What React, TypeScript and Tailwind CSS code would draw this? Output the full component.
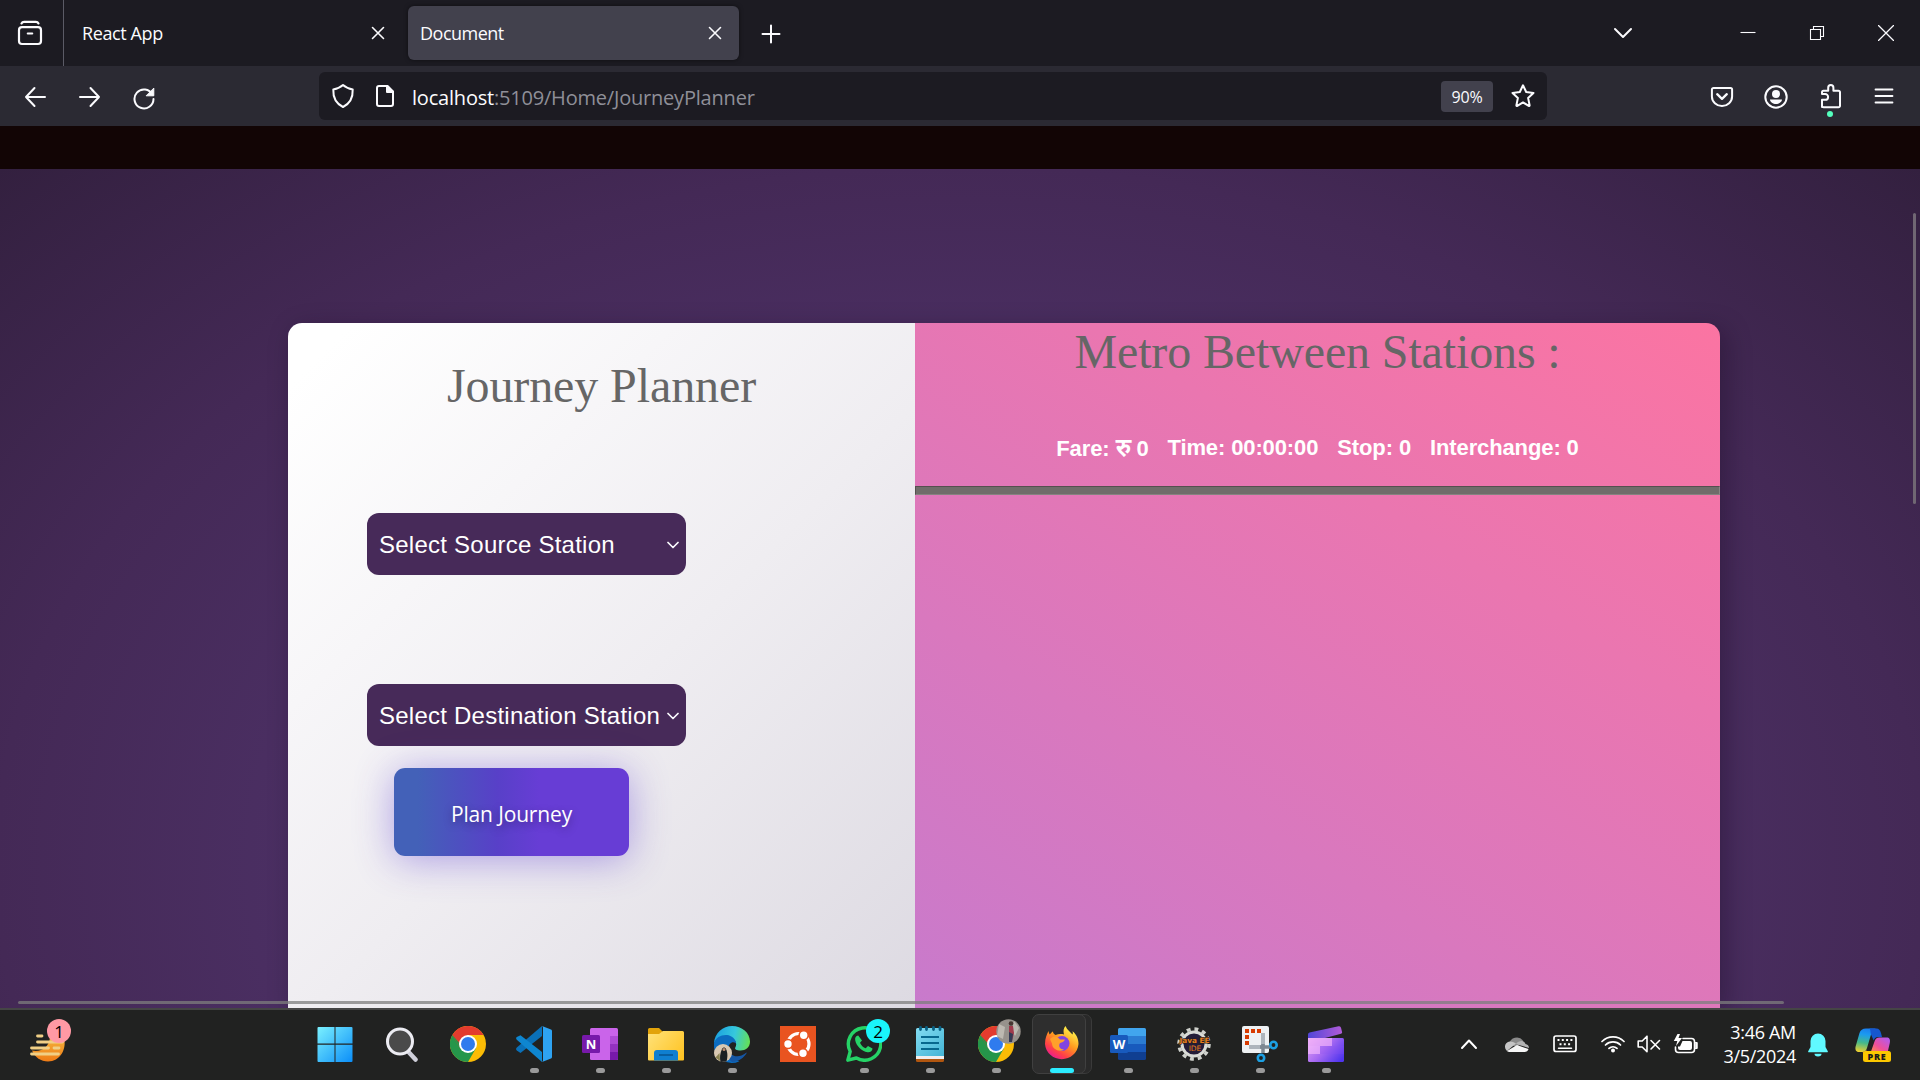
import React from "react";

type IconProps = { w: number; h: number; className?: string; children: React.ReactNode };

function Icon({ w, h, className = "", children }: IconProps) {
  return (
    <svg
      width={w}
      height={h}
      viewBox={`0 0 ${w} ${h}`}
      fill="none"
      stroke="#fbfbfe"
      strokeWidth={2}
      strokeLinecap="round"
      strokeLinejoin="round"
      className={`block shrink-0 ${className}`}
    >
      {children}
    </svg>
  );
}

function CloseIcon() {
  return (
    <Icon w={14} h={14}>
      <path d="M1.5 1.5l11 11M12.5 1.5l-11 11" strokeWidth={1.6} />
    </Icon>
  );
}

function TabBar() {
  return (
    <div className="flex h-[66px] items-center bg-[#1c1b22] text-[18px] text-[#fbfbfe]">
      <div className="flex h-full w-[64px] items-center border-r border-[#5b5b66] pl-[17px]">
        <Icon w={26} h={26}>
          <rect x="2" y="7.2" width="22" height="16.8" rx="3" strokeWidth={2.2} />
          <path d="M4.5 3.4c.6-1.2 1.4-1.5 2.6-1.5h11.800c1.200 0 2 .3 2.600 1.500M10.800 13.500h4.400" strokeWidth={2.2} />
        </Icon>
      </div>
      <div className="flex w-[344px] items-center justify-between pr-[23px] pl-[18px]">
        <span className="tracking-[-0.4px]">React App</span>
        <CloseIcon />
      </div>
      <div className="flex h-[54px] w-[331px] items-center justify-between rounded-[6px] bg-[#42414d] pr-[17px] pl-[12px] shadow-[0_0_4px_rgba(0,0,0,0.5)]">
        <span className="tracking-[-0.5px]">Document</span>
        <CloseIcon />
      </div>
      <Icon w={20} h={20} className="mt-[2px] ml-[22px]">
        <path d="M10 1.500v17M1.500 10h17" />
      </Icon>
      <div className="ml-auto flex items-center">
        <Icon w={20} h={12} className="mr-[107px]">
          <path d="M2 2l8 8 8-8" />
        </Icon>
        <Icon w={16} h={16} className="mr-[53px]">
          <path d="M.5 7.500h15" strokeWidth={1.100} strokeLinecap="butt" />
        </Icon>
        <Icon w={16} h={16} className="mr-[53px]">
          <path d="M1.500 4.500h10v10h-10zM4.500 4.500v-3h10v10h-3" strokeWidth={1.100} strokeLinejoin="miter" />
        </Icon>
        <Icon w={16} h={16} className="mr-[26px]">
          <path d="M.5.5l15 15M15.500.5l-15 15" strokeWidth={1.300} />
        </Icon>
      </div>
    </div>
  );
}

function Toolbar() {
  return (
    <div className="flex h-[60px] items-center bg-[#2b2a33] pl-[24px] text-[#fbfbfe]">
      <Icon w={22} h={22} className="mt-[2px] mr-[33px]">
        <path d="M10.500 2L2 11l8.500 9M2 11h19" />
      </Icon>
      <Icon w={22} h={22} className="mt-[2px] mr-[31px]">
        <path d="M11.500 2L20 11l-8.500 9M20 11H1" />
      </Icon>
      <Icon w={24} h={24} className="mt-[3px] mr-[163px]">
        <path d="M20.400 8.500A9.500 9.500 0 1 0 21.500 13" />
        <path d="M21.800 2.500v7.300h-7.300z" fill="#fbfbfe" strokeWidth={1} />
      </Icon>
      <div className="flex h-[48px] w-[1228px] items-center rounded-[6px] bg-[#1c1b22] pl-[12px]">
        <Icon w={24} h={26} className="mr-[20px]">
          <path d="M12 2C9.500 4.300 6 5.700 2.300 6.500c-.3 7 1.700 13.500 9.700 17.500 8-4 10-10.500 9.700-17.500C18 5.700 14.500 4.300 12 2z" />
        </Icon>
        <Icon w={20} h={24} className="mr-[16px]">
          <path d="M4 2h8.500L18 7.500V20a2 2 0 0 1-2 2H4a2 2 0 0 1-2-2V4a2 2 0 0 1 2-2z" />
          <path d="M12 2v6h6z" fill="#fbfbfe" />
        </Icon>
        <span className="mt-[3px] ml-px text-[20px] tracking-[-0.2px] text-[#8f8f98]">
          <span className="text-[#fbfbfe]">localhost</span>:5109/Home/JourneyPlanner
        </span>
        <span className="mt-px mr-[17px] ml-auto flex h-[31px] w-[52px] items-center justify-center rounded-[4px] bg-[#42414d] pt-px text-[16px] tracking-[-0.2px]">
          90%
        </span>
        <Icon w={26} h={26} className="mr-[11px]">
          <path d="M13 2.300l3.200 6.700 7.300.9-5.400 5 1.500 7.400c.1.600-.4.900-.9.600L13 19.400l-5.700 3.500c-.5.300-1 0-.9-.6l1.500-7.400-5.400-5 7.300-.9z" />
        </Icon>
      </div>
      <Icon w={24} h={22} className="mt-px ml-[163px]">
        <path d="M3.500 2h17a1.600 1.600 0 0 1 1.600 1.600v6.900a10.100 9.500 0 0 1-20.200 0V3.600A1.600 1.600 0 0 1 3.500 2z" />
        <path d="M7.200 8.200L12 12.800l4.800-4.600" strokeWidth={2.300} />
      </Icon>
      <Icon w={24} h={24} className="mt-px ml-[30px]">
        <circle cx="12" cy="12" r="10.700" />
        <circle cx="12" cy="9" r="4" fill="#fbfbfe" stroke="none" />
        <path d="M6 14.500h12c0 2.500-3 4.500-6 4.500s-6-2-6-4.500z" fill="#fbfbfe" stroke="none" />
      </Icon>
      <div className="relative ml-[32px]">
        <Icon w={22} h={26}>
          <path d="M2 24V16.800h3.200a2.900 2.900 0 0 0 0-5.800H2V9.300a1.500 1.500 0 0 1 1.500-1.500h4.700V4.700a2.600 2.600 0 0 1 5.200 0v3.100h5.100A1.500 1.500 0 0 1 20 9.300V22.700a1.500 1.500 0 0 1-1.500 1.500H3.500A1.500 1.500 0 0 1 2 22.700z" />
        </Icon>
        <span className="absolute top-[28px] left-[7px] size-[6px] rounded-full bg-[#54ffbd]" />
      </div>
      <Icon w={20} h={18} className="mb-px ml-[32px]">
        <path d="M1.500 2.500h17M1.500 9h17M1.500 15.500h17" strokeWidth={1.800} />
      </Icon>
    </div>
  );
}

function StationSelect({ label }: { label: string }) {
  return (
    <div className="flex h-[62px] w-[319px] items-center justify-between rounded-[12px] bg-[#472a59] pr-[7px] pl-[12px] text-[24px] text-white">
      <span className="mt-[2px] tracking-[0.24px] whitespace-nowrap">{label}</span>
      <Icon w={12} h={10} className="mt-px">
        <path d="M1 2.500L6 7.500l5-5" strokeWidth={1.700} />
      </Icon>
    </div>
  );
}

function PlannerPanel() {
  return (
    <section className="flex w-[627px] flex-col bg-[linear-gradient(135deg,#ffffff_5%,#efedf1_54%,#dddae2_100%)] font-['Liberation_Sans',Arial,sans-serif]">
      <h1 className="mt-[35px] h-[56px] text-center font-['Liberation_Serif','Times_New_Roman',serif] text-[48px] leading-[55px] tracking-[-0.1px] text-[#666666]">
        Journey Planner
      </h1>
      <div className="mt-[99px] ml-[79px]">
        <StationSelect label="Select Source Station" />
      </div>
      <div className="mt-[109px] ml-[79px]">
        <StationSelect label="Select Destination Station" />
      </div>
      <button className="mt-[22px] ml-[106px] h-[88px] w-[235px] rounded-[11px] bg-[linear-gradient(90deg,#4361b8_10%,#5840c8_44%,#673dd5_62%)] pt-[6px] font-['Open_Sans',sans-serif] text-[21px] tracking-[-0.15px] text-white shadow-[0_4px_38px_rgba(90,60,210,0.45)] [text-shadow:0_3px_8px_rgba(0,0,0,0.35)]">
        Plan Journey
      </button>
    </section>
  );
}

function ResultPanel() {
  return (
    <section className="flex w-[805px] flex-col bg-[linear-gradient(32deg,#c87acc_0%,#fb74a2_100%)] font-['Liberation_Sans',Arial,sans-serif]">
      <h2 className="mt-px h-[56px] text-center font-['Liberation_Serif','Times_New_Roman',serif] text-[48px] leading-[55px] tracking-[-0.13px] text-[#666666]">
        Metro Between Stations :
      </h2>
      <div className="mt-[55px] flex h-[26px] justify-center gap-[19px] text-[22px] leading-[26px] font-bold tracking-[-0.12px] whitespace-nowrap text-white">
        <span>
          Fare: <span className="text-[25px] leading-none font-semibold">रु</span> 0
        </span>
        <span>Time: 00:00:00</span>
        <span>Stop: 0</span>
        <span>Interchange: 0</span>
      </div>
      <div className="mt-[25px] h-[9px] border border-t-[#55504f] border-r-[#8b8785] border-b-[#858380] border-l-[#55504f] bg-[#706c6a]" />
    </section>
  );
}

function Page() {
  return (
    <main className="relative flex h-[839px] justify-center overflow-hidden bg-[radial-gradient(1358px_984px_at_50%_696px,#553670_0%,#4b2f63_49%,#442956_71%,#33203f_100%)] pl-[88px]">
      <div className="mt-[154px] flex h-[685px] w-[1432px] overflow-hidden rounded-t-[14px] shadow-[6px_6px_24px_rgba(20,5,30,0.35)]">
        <PlannerPanel />
        <ResultPanel />
      </div>
      <div className="absolute top-[44px] left-[1913px] h-[291px] w-[3px] rounded-full bg-[#706773]" />
      <div className="absolute top-[832px] left-[18px] h-[3px] w-[1766px] rounded-full bg-[#7d7d7d]/75" />
    </main>
  );
}

function ChromeLogo() {
  return (
    <svg width="36" height="36" viewBox="0 0 36 36" className="block">
      <circle cx="18" cy="18" r="18" fill="#fbbc05" />
      <path d="M18 18L2.400 9A18 18 0 0 0 18 36l7.800-13.500z" fill="#25964a" />
      <path d="M2.400 9A18 18 0 0 1 33.600 9H18l-7.800 13.500z" fill="#e33b2e" />
      <path d="M2.400 9l7.800 13.500L12 20z" fill="#25964a" />
      <circle cx="18" cy="18" r="9" fill="#fff" />
      <circle cx="18" cy="18" r="7" fill="#2f7bee" />
    </svg>
  );
}

function WindowsLogo() {
  return (
    <svg width="36" height="36" viewBox="0 0 36 36" className="block -translate-x-px">
      <defs>
        <linearGradient id="win" x1="0" y1="0" x2="36" y2="36" gradientUnits="userSpaceOnUse">
          <stop stopColor="#7df3ff" />
          <stop offset="1" stopColor="#0a8df8" />
        </linearGradient>
      </defs>
      <path d="M1.500 1h16v16.500H.5V2a1 1 0 0 1 1-1zM18.500 1h16a1 1 0 0 1 1 1v15.500h-17zM.5 18.700h17V36h-16a1 1 0 0 1-1-1zM18.500 18.700h17V35a1 1 0 0 1-1 1h-16z" fill="url(#win)" />
    </svg>
  );
}

function SearchLogo() {
  return (
    <svg width="36" height="36" viewBox="0 0 36 36" className="block">
      <path d="M25 26.500l6.500 7" stroke="#cfcfda" strokeWidth="4.500" strokeLinecap="round" />
      <circle cx="16" cy="15.500" r="12.500" fill="#4a4a4a" stroke="#ececf2" strokeWidth="3" />
    </svg>
  );
}

function CodeLogo() {
  return (
    <svg width="36" height="36" viewBox="0 0 36 36" className="block">
      <path d="M26 0v10L4.500 27 .8 24.500c-1-.7-1-2 0-3z" fill="#0a70b8" />
      <path d="M4.500 9.200L26 26v10L.8 13.800c-.9-.8-.9-2.100 0-2.800z" fill="#0e86d0" />
      <path d="M26 0l9 3.500c.6.300 1 .8 1 1.500v26c0 .7-.4 1.200-1 1.500L26 36c.6-.5 1-1 1-2V2c0-1-.4-1.500-1-2z" fill="#2ea3f2" />
    </svg>
  );
}

function OneNoteLogo() {
  return (
    <svg width="36" height="36" viewBox="0 0 36 36" className="block">
      <rect x="8" y="2" width="28" height="32" rx="1.500" fill="#ca64ea" />
      <path d="M28 10h8v8h-8z" fill="#ae4bd5" />
      <path d="M28 18h8v8h-8z" fill="#9332bf" />
      <path d="M28 26h8v6.500a1.500 1.500 0 0 1-1.500 1.500H28z" fill="#7719aa" />
      <rect x="0" y="9" width="18" height="18" rx="1.500" fill="#7719aa" />
      <text x="9" y="22.600" textAnchor="middle" fontSize="13" fontWeight="700" fill="#fff" fontFamily="Open Sans">N</text>
    </svg>
  );
}

function ExplorerLogo() {
  return (
    <svg width="36" height="36" viewBox="0 0 36 36" className="block">
      <defs>
        <linearGradient id="fold" x1="0" y1="5" x2="36" y2="34" gradientUnits="userSpaceOnUse">
          <stop stopColor="#ffe27a" />
          <stop offset="1" stopColor="#ffc21f" />
        </linearGradient>
      </defs>
      <path d="M0 3.500A1.500 1.500 0 0 1 1.500 2H11l4 4v6H0z" fill="#e2a30a" />
      <path d="M11 8l4-3h19.500A1.500 1.500 0 0 1 36 6.500v27a1 1 0 0 1-1 1H1a1 1 0 0 1-1-1V8z" fill="url(#fold)" />
      <path d="M6 34.500V27a3 3 0 0 1 3-3h18a3 3 0 0 1 3 3v7.500z" fill="#0f7fd0" />
      <path d="M11 29h14" stroke="#075391" strokeWidth="1.500" />
    </svg>
  );
}

function EdgeLogo() {
  return (
    <svg width="36" height="36" viewBox="0 0 36 36" className="block overflow-visible">
      <defs>
        <linearGradient id="edge" x1="0" y1="8" x2="36" y2="16" gradientUnits="userSpaceOnUse">
          <stop stopColor="#1aa0e0" />
          <stop offset=".55" stopColor="#36c8dd" />
          <stop offset="1" stopColor="#66e052" />
        </linearGradient>
      </defs>
      <path d="M0 17C.5 7 9 0 18 0c10 0 18 7 18 15.500 0 6-4.500 9-9.500 9-4 0-6-1.200-5.300-2.700 3-5-1-9.800-6.200-9.800C8 12 1 16 0 17z" fill="url(#edge)" />
      <path d="M0 17c1.500-5.500 7.500-8.500 13-8 4.500.5 9 4 9 8.500-3-3-7.500-.5-7.500 5 0 6 5 12 11 12.700A18 18 0 0 1 0 17z" fill="#0c6cc0" />
      <path d="M14.500 22c0 6.500 6.500 10 13 7.500 2-.7 4-2.500 5.500-3C30 32 24 36 18 36c-4-3-6-9-3.500-14z" fill="#1557a5" />
      <circle cx="9" cy="27" r="9" fill="#d9c8b2" />
      <path d="M6.500 36c-1-4-.5-9 1.500-13 1-2 3-2 4 0 2 4 1.500 9 .5 12.500z" fill="#1b2023" />
      <circle cx="10" cy="23.500" r="1.500" fill="#b98b70" />
      <path d="M1.500 31.500L5.500 27l.5 8z" fill="#8a8250" />
    </svg>
  );
}

function UbuntuLogo() {
  return (
    <svg width="36" height="36" viewBox="0 0 36 36" className="block">
      <path d="M0 0h36v36H0z" fill="#e95420" />
      <circle cx="18.500" cy="18" r="10.500" fill="none" stroke="#fff" strokeWidth="3.200" />
      {[[8, 18], [23.700, 9.200], [23, 27.300]].map(([cx, cy]) => (
        <circle key={cx} cx={cx} cy={cy} r="4.500" fill="#fff" stroke="#e95420" strokeWidth="1.600" />
      ))}
    </svg>
  );
}

function WhatsAppLogo() {
  return (
    <svg width="36" height="36" viewBox="0 0 36 36" className="block">
      <path d="M1.800 34.200l2.400-8.700A16.200 16.200 0 1 1 10.400 32z" fill="none" stroke="#25d366" strokeWidth="3.400" strokeLinejoin="round" />
      <path d="M12.200 9.500c-2.300.2-3.500 2.300-3 4.700 1.200 5.800 6.300 11 12.300 12 2.600.4 5-1.200 5-3.700l-4.500-2.500-2.300 2.300c-2.500-1-4.600-3-5.700-5.600l2-2.300z" fill="#25d366" />
    </svg>
  );
}

function NotepadLogo() {
  return (
    <svg width="36" height="36" viewBox="0 0 36 36" className="block">
      <defs>
        <linearGradient id="note" x1="4" y1="2" x2="32" y2="32" gradientUnits="userSpaceOnUse">
          <stop stopColor="#83dcf1" />
          <stop offset="1" stopColor="#41b3d5" />
        </linearGradient>
      </defs>
      <path d="M4 29h28v5.500a1.500 1.500 0 0 1-1.500 1.500h-25A1.500 1.500 0 0 1 4 34.500z" fill="#b1560f" />
      <path d="M4 28h28v5H4z" fill="#f0eeee" />
      <path d="M4 3.500A1.500 1.500 0 0 1 5.500 2h25A1.500 1.500 0 0 1 32 3.500V30H4z" fill="url(#note)" />
      <path d="M9 11h18M9 17h18M9 23h18" stroke="#07688e" strokeWidth="1.800" />
      <path d="M8.500 1.500v2M14.500 1.500v2M21.500 1.500v2M28 1.500v2" stroke="#086083" strokeWidth="2.800" strokeLinecap="round" />
    </svg>
  );
}

function FirefoxLogo() {
  return (
    <svg width="36" height="36" viewBox="0 0 36 36" className="block">
      <defs>
        <linearGradient id="fox" x1="28" y1="4" x2="9" y2="33" gradientUnits="userSpaceOnUse">
          <stop stopColor="#fff04a" />
          <stop offset=".4" stopColor="#ff9a1f" />
          <stop offset=".75" stopColor="#ff3f48" />
          <stop offset="1" stopColor="#e8179a" />
        </linearGradient>
      </defs>
      <path d="M1 18C1 12 3 8 4.500 5c.2 1.500.6 2.500 1.200 3.500C7 7.200 8.300 5.500 9 5.500c0 1.500.8 2.600 2.500 3.500 3-1.200 6-1 8.500-.5-1-3.500-.5-6.500 1.500-8.500 1.500 4 5 6 7 8.500.5-1 .5-2-.2-3.200C32.500 8 34.500 13 34.500 18a16.800 16.500 0 0 1-33.500 0z" fill="url(#fox)" />
      <circle cx="18" cy="17.500" r="7.500" fill="#8044e0" />
      <path d="M6 13c3-3.500 7-3.500 10 .5h5c-1 2.500-3 3-5 3.500-2 3 0 6.500 4 6.500-4 3-12 0-12-6z" fill="#ffa12a" />
    </svg>
  );
}

function WordLogo() {
  return (
    <svg width="36" height="36" viewBox="0 0 36 36" className="block">
      <path d="M8 3.500A1.500 1.500 0 0 1 9.500 2h25A1.500 1.500 0 0 1 36 3.500V10H8z" fill="#41a5ee" />
      <path d="M8 10h28v8H8z" fill="#2b7cd3" />
      <path d="M8 18h28v8H8z" fill="#185abd" />
      <path d="M8 26h28v6.500a1.500 1.500 0 0 1-1.500 1.500h-25A1.500 1.500 0 0 1 8 32.500z" fill="#103f91" />
      <rect x="0" y="9" width="18" height="18" rx="1.500" fill="#185abd" />
      <text x="9" y="22.500" textAnchor="middle" fontSize="13" fontWeight="700" fill="#fff" fontFamily="Open Sans">W</text>
    </svg>
  );
}

function JavaLogo() {
  return (
    <svg width="36" height="36" viewBox="0 0 36 36" className="block overflow-visible">
      <circle cx="18" cy="18" r="15" fill="none" stroke="#cfd1cc" strokeWidth="3.500" strokeDasharray="3.900 3.954" />
      <circle cx="18" cy="18" r="12" fill="#241d38" stroke="#d9dbd6" strokeWidth="3" />
      <text x="18.500" y="16.600" textAnchor="middle" fontSize="7.300" fontWeight="700" fill="#e77d1c" stroke="#241d20" strokeWidth="1.200" paintOrder="stroke" fontFamily="DejaVu Sans">Java EE</text>
      <text x="19" y="25" textAnchor="middle" fontSize="7.500" fill="#e77d1c" fontFamily="DejaVu Sans">IDE</text>
    </svg>
  );
}

function SnipLogo() {
  return (
    <svg width="36" height="36" viewBox="0 0 36 36" className="block">
      <rect x="0" y="0" width="27" height="27" rx="2" fill="#eef1f3" />
      <path d="M3 5h4M9 5h4M15 5h4M5 9v4M5 15v4" stroke="#d83b01" strokeWidth="4" />
      <path d="M7 21h14M21 7v14" stroke="#aeb5bc" strokeWidth="4" />
      <path d="M18 21h10M21 18v9" stroke="#7e8892" strokeWidth="3.500" />
      <circle cx="31.500" cy="19" r="3.200" fill="none" stroke="#1ca0e3" strokeWidth="2.600" />
      <circle cx="19" cy="32" r="3.200" fill="none" stroke="#1ca0e3" strokeWidth="2.600" />
    </svg>
  );
}

function ClipLogo() {
  return (
    <svg width="36" height="36" viewBox="0 0 36 36" className="block">
      <defs>
        <linearGradient id="clap" x1="0" y1="0" x2="36" y2="0" gradientUnits="userSpaceOnUse">
          <stop stopColor="#5145d8" />
          <stop offset="1" stopColor="#b65cd8" />
        </linearGradient>
        <linearGradient id="clip" x1="0" y1="12" x2="30" y2="38" gradientUnits="userSpaceOnUse">
          <stop stopColor="#e6a3f5" />
          <stop offset=".5" stopColor="#a86af2" />
          <stop offset="1" stopColor="#4f35ee" />
        </linearGradient>
      </defs>
      <path d="M0 8.500A2 2 0 0 1 1.500 6.600L30.500.3A2 2 0 0 1 33 1.800l1 4a1.500 1.500 0 0 1-1 1.900L17 12H0z" fill="url(#clap)" />
      <path d="M0 12h34.500a1.500 1.500 0 0 1 1.500 1.500v21a1.500 1.500 0 0 1-1.500 1.500h-33A1.500 1.500 0 0 1 0 34.500z" fill="url(#clip)" />
      <path d="M0 12h24v8H0z" fill="#f5b6fb" fillOpacity=".65" />
      <path d="M0 20h12v8H0z" fill="#fbc0ff" fillOpacity=".6" />
      <path d="M12 20h24v8H12z" fill="#8b4ef5" fillOpacity=".2" />
    </svg>
  );
}

const apps: { name: string; logo: React.ReactNode; running?: boolean; active?: boolean; badge?: React.ReactNode }[] = [
  { name: "Start", logo: <WindowsLogo /> },
  { name: "Search", logo: <SearchLogo /> },
  { name: "Chrome", logo: <ChromeLogo /> },
  { name: "VS Code", logo: <CodeLogo />, running: true },
  { name: "OneNote", logo: <OneNoteLogo />, running: true },
  { name: "Explorer", logo: <ExplorerLogo />, running: true },
  { name: "Edge", logo: <EdgeLogo />, running: true },
  { name: "Ubuntu", logo: <UbuntuLogo /> },
  {
    name: "WhatsApp",
    logo: <WhatsAppLogo />,
    running: true,
    badge: (
      <span className="absolute top-[9px] left-[35px] flex size-[24px] items-center justify-center rounded-full bg-[#19f5fb] text-[17px] leading-none text-black">
        2
      </span>
    ),
  },
  { name: "Notepad", logo: <NotepadLogo />, running: true },
  {
    name: "Chrome profile",
    logo: <ChromeLogo />,
    running: true,
    badge: (
      <svg width="25" height="25" viewBox="0 0 25 25" className="absolute top-[9px] left-[33px]">
        <circle cx="12.500" cy="12.500" r="12.200" fill="#97928c" />
        <path d="M3 5l6 3-2 12-6-3zM18 2l5 7-4 8-3-6z" fill="#bdb9b1" />
        <path d="M13 7h4l1 7-2 8h-3z" fill="#a03a4c" />
        <path d="M13 13l4 2-1 8h-3z" fill="#343a55" />
        <circle cx="15" cy="4.500" r="2.300" fill="#473732" />
      </svg>
    ),
  },
  { name: "Firefox", logo: <FirefoxLogo />, running: true, active: true },
  { name: "Word", logo: <WordLogo />, running: true },
  { name: "Java EE", logo: <JavaLogo />, running: true },
  { name: "Snipping Tool", logo: <SnipLogo />, running: true },
  { name: "Clipchamp", logo: <ClipLogo />, running: true },
];

function TaskbarApps() {
  return (
    <div className="flex">
      {apps.map((app) => (
        <div key={app.name} className="relative flex h-[70px] w-[66px] flex-col items-center pt-[16px]">
          {app.active && (
            <>
              <span className="absolute top-[4px] left-[6px] h-[60px] w-[57px] rounded-[7px] border border-[#3a3a3a] bg-[#292929]" />
              <span className="absolute top-[4px] left-[3px] h-[60px] w-[54px] rounded-[7px] border border-[#404040] bg-[#2e2e2e]" />
            </>
          )}
          <div className="relative">{app.logo}</div>
          {app.badge}
          {app.running && !app.active && <span className="relative mt-[6px] h-[5px] w-[9px] rounded-full bg-[#9a9a9a]" />}
          {app.active && <span className="relative mt-[6px] h-[5px] w-[24px] rounded-full bg-[#2cecff]" />}
        </div>
      ))}
    </div>
  );
}

function Weather() {
  return (
    <div className="relative mt-[17px] ml-[30px] h-[44px] w-[42px]">
      <svg width="42" height="44" viewBox="0 0 42 44" className="block">
        <defs>
          <linearGradient id="moon" x1="0" y1="12" x2="0" y2="42" gradientUnits="userSpaceOnUse">
            <stop stopColor="#f5c044" />
            <stop offset="1" stopColor="#ef7d17" />
          </linearGradient>
        </defs>
        <path d="M34 19c3 11-4 23.500-16 23.500-7 0-13-4-16-11 9 2 17-3 18-13z" fill="url(#moon)" />
        <path d="M7.500 17h4.500M7.500 23h25M1.500 29h17M24 29h5M1.500 35h27" stroke="#f0cf86" strokeWidth="2.800" strokeLinecap="round" />
      </svg>
      <span className="absolute top-0 left-[17px] flex size-[24px] items-center justify-center rounded-full bg-[#ff99a4] text-[17px] leading-none text-black">
        1
      </span>
    </div>
  );
}

function CopilotLogo() {
  return (
    <svg width="36" height="36" viewBox="0 0 36 36" className="block">
      <defs>
        <linearGradient id="cpa" x1="8" y1="0" x2="4" y2="24" gradientUnits="userSpaceOnUse">
          <stop stopColor="#1a7ff0" />
          <stop offset=".25" stopColor="#1b9bf0" />
          <stop offset=".6" stopColor="#45b98a" />
          <stop offset="1" stopColor="#f4d02c" />
        </linearGradient>
        <linearGradient id="cpb" x1="32" y1="9" x2="20" y2="26" gradientUnits="userSpaceOnUse">
          <stop stopColor="#b25bf0" />
          <stop offset=".6" stopColor="#ee4f9b" />
          <stop offset="1" stopColor="#ff8a4c" />
        </linearGradient>
      </defs>
      <path d="M4.500 5C5.500 2 7.500.5 11 .5h10c-3 .5-4 2.500-5 6l-4 13.500c-.8 2.800-2 4-4.500 4H4C.8 24 0 21.500.6 18.500z" fill="url(#cpa)" />
      <path d="M14 .5h7.500c2.500 0 3.500 1.500 4.500 4.500l1 4h-4c-2.500 0-3.500 1.500-4.300 3.500L16 6.500C15 3 16 1.500 14 .5z" fill="#1657cf" />
      <path d="M24.500 9.500h7c3 0 4 2 3.300 5.500l-2 8.500H16l3.500-10c.8-2.500 2.200-4 5-4z" fill="url(#cpb)" />
      <path d="M7.500 24c1.500 0 3-.5 4-2v4H9z" fill="#ff7a4c" />
      <rect x="8" y="23" width="28" height="11" rx="2.500" fill="#fcc800" />
      <text x="22" y="31.800" textAnchor="middle" fontSize="9" fontWeight="800" fill="#1a1a1a" fontFamily="Open Sans" letterSpacing=".7">PRE</text>
    </svg>
  );
}

function Tray() {
  return (
    <div className="ml-auto flex h-[68px] items-center text-white">
      <Icon w={18} h={12} className="mr-[27px]">
        <path d="M2 10l7-7.500 7 7.500" stroke="#fff" />
      </Icon>
      <svg width="24" height="17" viewBox="0 0 24 17" className="mr-[24px] block">
        <path d="M4 8a8 8 0 0 1 14-3.500L12 11z" fill="#8b8b8b" />
        <path d="M0 11a5 5 0 0 1 5-5.500c2 0 4 .8 6 2L2 15a5 5 0 0 1-2-4z" fill="#c5c5c5" />
        <path d="M11 7.500c2-2 5-3 7.500-2 1 .5 1.500 1.500 2 2.500 2 .3 3.500 2 3.500 4l-10-3z" fill="#b3b3b3" />
        <path d="M2 15l10-6 11.500 4c-.5 2-2 3-4 3H5c-1.200 0-2.300-.4-3-1z" fill="#f6f6f6" />
      </svg>
      <Icon w={24} h={18} className="mr-[24px]">
        <rect x="1" y="1" width="22" height="15.500" rx="2" stroke="#fff" strokeWidth={1.700} />
        <path d="M4.500 5h15M6.500 9.200h12" stroke="#fff" strokeWidth={2} strokeLinecap="butt" strokeDasharray="2 2.300" />
        <path d="M5.500 13.300h13" stroke="#fff" strokeWidth={1.500} />
      </Icon>
      <Icon w={24} h={18} className="mr-[12px]">
        <path d="M1 6.500a15.500 15.500 0 0 1 22 0M4.500 10a10.800 10.800 0 0 1 15 0M8 13.400a6 6 0 0 1 8 0" stroke="#fff" strokeWidth={1.700} />
        <circle cx="12" cy="15.500" r="2" fill="#fff" stroke="none" />
      </Icon>
      <Icon w={24} h={20} className="mr-[12px]">
        <path d="M1.200 7h4L10 2.200v15.600L5.200 13h-4z" stroke="#fff" strokeWidth={1.600} />
        <path d="M14 6.500l8.500 8.500M22.500 6.500L14 15" stroke="#fff" strokeWidth={1.600} />
      </Icon>
      <Icon w={26} h={22} className="mr-[23px]">
        <path d="M10 5.500h8.500a3 3 0 0 1 3 3v8a3 3 0 0 1-3 3h-13a3 3 0 0 1-3-3V14" stroke="#fff" strokeWidth={1.600} />
        <path d="M9.500 8H17a2 2 0 0 1 2 2v5a2 2 0 0 1-2 2H7a2 2 0 0 1-2-2v-1.500h2z" fill="#fff" stroke="none" />
        <path d="M22.500 9.500h1.700v6h-1.700z" fill="#fff" stroke="#fff" strokeWidth={1} />
        <path d="M4.500 1L.8 8h3.500L3 13l6-8H5.500L7 1z" fill="#fff" stroke="none" />
      </Icon>
      <div className="w-[74px] text-right text-[18px] leading-[24px] tracking-[-0.3px] whitespace-nowrap">
        <div>3:46 AM</div>
        <div>3/5/2024</div>
      </div>
      <svg width="20" height="24" viewBox="0 0 20 24" className="mt-[2px] ml-[12px] block">
        <path d="M10 .5a7.500 7.500 0 0 1 7.500 7.500v6l2.300 4.200c.2.500 0 1-.6 1H.8c-.6 0-.8-.5-.6-1L2.500 14V8A7.500 7.500 0 0 1 10 .5zM6.500 20.800h7a3.500 2.700 0 0 1-7 0z" fill="#60f9ff" />
      </svg>
      <div className="mt-[3px] mr-[29px] ml-[27px]">
        <CopilotLogo />
      </div>
    </div>
  );
}

export default function App() {
  return (
    <div className="flex h-[1080px] w-[1920px] flex-col overflow-hidden font-['Open_Sans','Noto_Sans',sans-serif]">
      <TabBar />
      <Toolbar />
      <div className="h-[43px] bg-[#120505]" />
      <Page />
      <footer className="flex h-[72px] shrink-0 border-t-2 border-[#454545] bg-[#212221]">
        <div className="-mt-[9px] w-[303px] pt-px">
          <Weather />
        </div>
        <TaskbarApps />
        <Tray />
      </footer>
    </div>
  );
}
